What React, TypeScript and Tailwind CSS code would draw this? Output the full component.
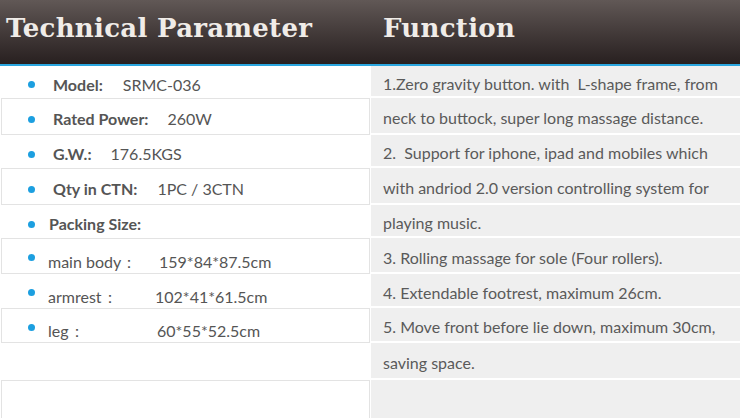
import React from "react";

const body = { fontFamily: "Lato, 'Open Sans', sans-serif" };
const head = { fontFamily: "'DejaVu Serif', 'Liberation Serif', serif" };

const Bullet = ({ raised }: { raised?: boolean }) => (
  <span
    className={`w-[7px] h-[7px] rounded-full bg-[#1c9fe0] shrink-0 ${raised ? "self-start mt-[10px]" : ""}`}
  />
);

type Row = { h: number; boxed: boolean; content: React.ReactNode };

const leftRows: Row[] = [
  {
    h: 32,
    boxed: false,
    content: (
      <>
        <Bullet />
        <span className="ml-[18px] font-bold">Model:</span>
        <span className="ml-[20px]">SRMC-036</span>
      </>
    ),
  },
  {
    h: 37,
    boxed: true,
    content: (
      <>
        <Bullet />
        <span className="ml-[18px] font-bold">Rated Power:</span>
        <span className="ml-[19px]">260W</span>
      </>
    ),
  },
  {
    h: 33,
    boxed: false,
    content: (
      <>
        <Bullet />
        <span className="ml-[18px] font-bold">G.W.:</span>
        <span className="ml-[19px]">176.5KGS</span>
      </>
    ),
  },
  {
    h: 37,
    boxed: true,
    content: (
      <>
        <Bullet />
        <span className="ml-[18px] font-bold">Qty in CTN:</span>
        <span className="ml-[20px]">1PC / 3CTN</span>
      </>
    ),
  },
  {
    h: 33,
    boxed: false,
    content: (
      <>
        <Bullet />
        <span className="ml-[14px] font-bold">Packing Size:</span>
      </>
    ),
  },
  {
    h: 36,
    boxed: true,
    content: (
      <>
        <Bullet raised />
        <span className="ml-[13px] w-[111px] mt-[6px]">main body：</span>
        <span className="mt-[6px]">159*84*87.5cm</span>
      </>
    ),
  },
  {
    h: 34,
    boxed: false,
    content: (
      <>
        <Bullet raised />
        <span className="ml-[13px] w-[107px] mt-[6px]">armrest：</span>
        <span className="mt-[6px]">102*41*61.5cm</span>
      </>
    ),
  },
  {
    h: 35,
    boxed: true,
    content: (
      <>
        <Bullet raised />
        <span className="ml-[13px] w-[109px] mt-[6px]">leg：</span>
        <span className="mt-[6px]">60*55*52.5cm</span>
      </>
    ),
  },
  { h: 37, boxed: false, content: null },
  { h: 40, boxed: true, content: null },
];

const rightRows: { h: number; text: string }[] = [
  { h: 32, text: "1.Zero gravity button. with  L-shape frame, from" },
  { h: 37, text: "neck to buttock, super long massage distance." },
  { h: 33, text: "2.  Support for iphone, ipad and mobiles which" },
  { h: 37, text: "with andriod 2.0 version controlling system for" },
  { h: 33, text: "playing music." },
  { h: 36, text: "3. Rolling massage for sole (Four rollers)." },
  { h: 34, text: "4. Extendable footrest, maximum 26cm." },
  { h: 35, text: "5. Move front before lie down, maximum 30cm," },
  { h: 37, text: "saving space." },
  { h: 40, text: "" },
];

export default function App() {
  return (
    <div className="w-[740px] h-[418px] overflow-hidden bg-white" style={body}>
      <div className="h-[66px] flex bg-gradient-to-b from-[#615856] to-[#282020] border-b-2 border-[#2aa6df]">
        <div className="w-[371px] pl-[6px] pt-[9px]">
          <span className="text-[26px] font-bold text-[#f0ece8] tracking-[0.3px] whitespace-nowrap" style={head}>
            Technical Parameter
          </span>
        </div>
        <div className="flex-1 pl-[12px] pt-[9px]">
          <span className="text-[26px] font-bold text-[#f0ece8] tracking-[0.3px]" style={head}>
            Function
          </span>
        </div>
      </div>
      <div className="flex">
        <div className="w-[370px] flex flex-col">
          {leftRows.map((r, i) => (
            <div
              key={i}
              style={{ height: r.h }}
              className={`flex items-center pt-[5px] text-[16px] text-[#555] whitespace-pre ${
                r.boxed ? "border border-[#e3e3e3] ml-[1px] pl-[26px]" : "pl-[28px]"
              }`}
            >
              {r.content}
            </div>
          ))}
        </div>
        <div className="flex-1 ml-[1px] flex flex-col">
          {rightRows.map((r, i) => (
            <div
              key={i}
              style={{ height: r.h }}
              className="flex items-center pl-[12px] pt-[5px] bg-[#efefef] border-b-2 border-white text-[16px] text-[#5a5a5a] whitespace-pre"
            >
              {r.text}
            </div>
          ))}
        </div>
      </div>
    </div>
  );
}
